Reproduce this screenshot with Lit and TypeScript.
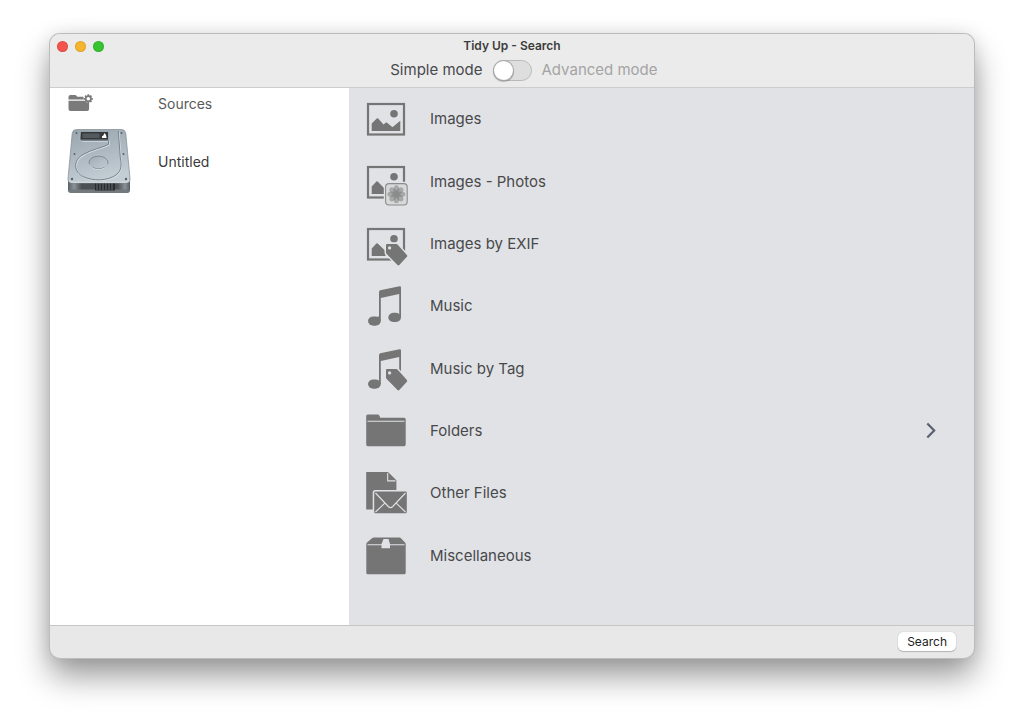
import { LitElement, html, css, svg, nothing } from "lit";
import { customElement, property, state } from "lit/decorators.js";

const frame = svg`
  <rect class="line" x="3" y="8" width="36" height="30.5" stroke-width="2.2" />
  <circle cx="29" cy="17.8" r="3.8" />`;

const tag = svg`
  <path class="halo" d="M22 23h9.2q.8 0 1.3.6l9.4 10.5q.7.9 0 1.7l-7.600 8.200q-.9.800-1.800 0L21.700 33q-.7-.6-.7-1.400V24q0-1 1-1z" />
  <circle class="hole" cx="24.600" cy="26.900" r="1.600" />`;

const icons: Record<string, unknown> = {
  images: svg`${frame}
    <path d="M6.7 27.5 12 22.3q.6-.4 1.2.2l5.3 6 2.9-2.3 5.6 4.6q.5.4 1 0l7.3-6V35H6.7z" />`,
  photos: svg`${frame}
    <path d="M6.7 27.5 11.4 22.4q.7-.5 1.3.1L19 29v6H6.7z" />
    <rect class="cut" x="18.8" y="22.8" width="25" height="24.2" rx="4" />
    <rect class="badge" x="20.6" y="24.6" width="21.6" height="21.4" rx="3.5" />
    <g class="petals">
      ${[0, 45, 90, 135, 180, 225, 270, 315].map(
        (a) => svg`<ellipse cx="31.4" cy="30.6" rx="2.8" ry="4.3" transform="rotate(${a} 31.4 35.3)" />`
      )}
    </g>
    <circle class="core" cx="31.4" cy="35.3" r="1.8" />`,
  exif: svg`${frame}
    <path d="M6.7 27.5 11.4 22.4q.7-.5 1.3.1L20.500 30v5H6.7z" />${tag}`,
  music: svg`
    <path d="M14 9q0-1.300 1.200-1.700L34.500 3.300Q36 3 36 4.500V34H34.200V11L15.800 15V38H14z" />
    <rect x="3" y="33.500" width="12.800" height="9.200" rx="5.500" ry="4.600" />
    <rect x="13" y="33.500" width="1.500" height="4" />
    <rect x="23.300" y="29.800" width="12.700" height="9.200" rx="5.500" ry="4.600" />`,
  musictag: svg`
    <path d="M14 9q0-1.300 1.200-1.700L34.500 3.300Q36 3 36 4.500V30H34.200V11L15.800 15V38H14z" />
    <rect x="3" y="33.500" width="12.800" height="9.200" rx="5.500" ry="4.600" />${tag}`,
  folders: svg`
    <path d="M1.200 8q0-1.500 1.500-1.500h10q1.300 0 1.700 1.200l.9 2h23.800q1.600 0 1.600 1.600v25.300q0 1.600-1.600 1.600H2.800q-1.600 0-1.600-1.600z" />
    <path class="crease" d="M2.500 13.300H39.500" />`,
  files: svg`
    <path d="M1.200 2H23l8.400 8.200v29.200H1.200z" />
    <path class="crease" d="M22.700 3v7.900h7.800" />
    <rect class="halo" x="9.200" y="21.500" width="32.600" height="21.700" rx="1.200" />
    <path class="crease" d="M10.500 23 23.300 36.500q2.200 2.200 4.400 0L40.500 23M10.500 42l9.300-8.800M40.500 42l-9.300-8.800" />`,
  misc: svg`
    <path d="M7 5.300q.7-.7 1.700-.7h25.600q1 0 1.700.7l4 4.200q.7.700.7 1.700v28.500q0 1.600-1.600 1.600H2.900q-1.600 0-1.600-1.600V11.200q0-1 .7-1.700z" />
    <path class="crease" d="M2.500 11.700H39.500" />
    <path class="cut" d="M18.500 6h5l1.500 5v4.200h-8.500V11z" />`,
};

interface Category {
  id: string;
  label: string;
  more?: boolean;
}

const categories: Category[] = [
  { id: "images", label: "Images" },
  { id: "photos", label: "Images - Photos" },
  { id: "exif", label: "Images by EXIF" },
  { id: "music", label: "Music" },
  { id: "musictag", label: "Music by Tag" },
  { id: "folders", label: "Folders", more: true },
  { id: "files", label: "Other Files" },
  { id: "misc", label: "Miscellaneous" },
];

@customElement("category-row")
class CategoryRow extends LitElement {
  @property({ attribute: false }) category!: Category;

  static styles = css`
    :host {
      display: grid;
    }
    .row {
      display: flex;
      align-items: center;
      gap: 21px;
      padding: 0 38px 0 16px;
      border: 0;
      background: none;
      font: 400 15px/20px Inter, sans-serif;
      color: #48494b;
      text-align: left;
    }
    .icon {
      flex: none;
      width: 44px;
      height: 48px;
      fill: #757575;
    }
    .label {
      flex: 1;
    }
    .line {
      fill: none;
      stroke: #757575;
    }
    .halo {
      stroke: #e1e2e6;
      stroke-width: 3;
      paint-order: stroke;
    }
    .cut,
    .hole {
      fill: #e1e2e6;
    }
    .crease {
      fill: none;
      stroke: #e1e2e6;
      stroke-width: 1.1;
    }
    .badge {
      fill: #d8d9db;
      stroke: #8c8c8c;
      stroke-width: 1.1;
    }
    .petals {
      fill: #777;
      fill-opacity: 0.5;
    }
    .core {
      fill: #8b8b8b;
    }
    .chevron {
      flex: none;
      width: 10px;
      height: 18px;
      fill: none;
      stroke: #5b6070;
      stroke-width: 2.2;
    }
  `;

  render() {
    return html`
      <button class="row" type="button">
        <svg class="icon" viewBox="0 -1 44 48" aria-hidden="true">${icons[this.category.id]}</svg>
        <span class="label">${this.category.label}</span>
        ${this.category.more
          ? html`<svg class="chevron" viewBox="0 0 10 18" aria-hidden="true">
              <path d="M1.300 1.500 8.200 8.500 1.300 15.500" />
            </svg>`
          : nothing}
      </button>
    `;
  }
}

@customElement("drive-icon")
class DriveIcon extends LitElement {
  static styles = css`
    :host {
      display: block;
    }
    .drive {
      display: block;
      width: 64px;
      height: 68px;
    }
  `;

  render() {
    return html`
      <svg class="drive" viewBox="0 0 64 68" aria-hidden="true">
        <defs>
          <linearGradient id="top" x1="0" y1="0" x2="0.3" y2="1">
            <stop offset="0" stop-color="#99a5ad" />
            <stop offset="0.6" stop-color="#b0bbc4" />
            <stop offset="1" stop-color="#c3cdd4" />
          </linearGradient>
          <linearGradient id="front" x1="0" y1="0" x2="1" y2="0">
            <stop offset="0" stop-color="#5b6267" />
            <stop offset="0.1" stop-color="#8b9398" />
            <stop offset="0.22" stop-color="#4a5054" />
            <stop offset="0.8" stop-color="#4a5054" />
            <stop offset="0.92" stop-color="#8b9398" />
            <stop offset="1" stop-color="#565d61" />
          </linearGradient>
          <linearGradient id="disc" x1="0" y1="0" x2="1" y2="1">
            <stop offset="0" stop-color="#a0abb4" />
            <stop offset="1" stop-color="#c2ccd3" />
          </linearGradient>
        </defs>
        <path d="M1 52H63V62q0 3-3 3H4q-3 0-3-3z" fill="url(#front)" />
        <path d="M2 61.500H62V63q-.5 2-3 2H5q-2.500 0-3-2z" fill="#73797d" />
        <rect x="28" y="55" width="20" height="7.500" fill="#282c2f" />
        <path d="M30 55v7M33 55v7M36 55v7M39 55v7M42 55v7M45 55v7" stroke="#798085" stroke-width="0.8" />
        <path d="M9.500 1.500H54.500q3.800 0 4.300 4L63 50.500q.4 4.500-4 4.500H5q-4.400 0-4-4.500L5.200 5.500q.5-4 4.300-4z" fill="url(#top)" stroke="#7f8a91" stroke-width="0.7" />
        <path d="M2 52.500q1 1.800 3.200 1.800h53.600q2.200 0 3.200-1.800" fill="none" stroke="#dce3e7" stroke-width="1" />
        <path d="M13.500 3.500H41.500V12H13z" fill="#33383b" stroke="#bac3ca" stroke-width="0.6" />
        <path d="M15.500 5.500h17v4.500h-17z" fill="#545a5e" />
        <path d="M35 10v-1.800l1.300-.8 1.200-2.400 1.500 2 .6 3z" fill="#fff" />
        <path d="M14.500 12.500H41.500V16.500C34 20 25 21.500 17 26 5 32.500 7 44 16 48.500c10 5 25 4.300 33-1.500 6-4.500 5.500-11 4.300-17L51.300 3" fill="none" stroke="#d5dde2" stroke-width="1.3" transform="translate(.6 .6)" />
        <path d="M14.500 12.500H41.500V16.500C34 20 25 21.500 17 26 5 32.500 7 44 16 48.500c10 5 25 4.300 33-1.500 6-4.500 5.500-11 4.300-17L51.300 3" fill="none" stroke="#707b83" stroke-width="0.9" />
        <ellipse cx="31.500" cy="34.500" rx="9.500" ry="6.300" fill="url(#disc)" stroke="#74808a" stroke-width="0.8" />
        <path d="M22.500 36.500q2.500 5 9 5t9-5" fill="none" stroke="#d9e1e6" stroke-width="0.8" />
        <g fill="#56616a">
          <circle cx="9.500" cy="5" r="1" /><circle cx="54.500" cy="5" r="1" />
          <circle cx="7.500" cy="26" r="1" /><circle cx="56.500" cy="26" r="1" />
          <circle cx="5" cy="51" r="1.200" /><circle cx="59" cy="51" r="1.200" />
        </g>
      </svg>
    `;
  }
}

@customElement("app-root")
export class AppRoot extends LitElement {
  @state() private advanced = false;

  static styles = css`
    :host {
      display: flex;
      box-sizing: border-box;
      min-height: 100vh;
      padding: 34px 50px 66px;
      background: #fff;
      overflow: hidden;
      font: 400 15px/20px Inter, sans-serif;
      color: #48494b;
    }
    .window {
      flex: 1;
      display: flex;
      flex-direction: column;
      border-radius: 10px;
      overflow: hidden;
      background: #e8e8e8;
      box-shadow: 0 0 0 1px #bcbcbc, 0 18px 32px rgba(0, 0, 0, 0.4), 0 0 18px rgba(0, 0, 0, 0.1);
    }
    .bar {
      padding: 5px 0 6px;
      background: #ebebeb;
      border-bottom: 1px solid #cdcdcd;
    }
    .titlebar {
      display: grid;
      grid-template-columns: 1fr auto 1fr;
      align-items: center;
      padding: 0 7px;
    }
    .lights {
      display: flex;
      gap: 7px;
    }
    .light {
      width: 11px;
      height: 11px;
      padding: 0;
      border: 0;
      border-radius: 50%;
      box-shadow: inset 0 0 0 1px rgba(0, 0, 0, 0.1);
    }
    .close { background: #f5534d; }
    .minimise { background: #f6b52e; }
    .zoom { background: #38c432; }
    .title {
      margin: 0;
      font: 600 12px/14px Inter, sans-serif;
      color: #3c3c3c;
    }
    .modes {
      display: grid;
      grid-template-columns: 1fr auto 1fr;
      align-items: center;
      gap: 10px;
      height: 22px;
      margin-top: 6px;
    }
    .modes label:first-child {
      text-align: right;
    }
    .off {
      color: #a4a4a4;
    }
    .switch {
      appearance: none;
      box-sizing: border-box;
      display: flex;
      width: 39px;
      height: 21px;
      margin: 0;
      border: 1px solid #b9b9b9;
      border-radius: 11px;
      background: #dedede;
    }
    .switch::before {
      content: "";
      width: 19px;
      height: 19px;
      border-radius: 50%;
      background: #fff;
      box-shadow: 0 0 0 1px #a8a8a8, 0 1px 1px 1px rgba(0, 0, 0, 0.25);
    }
    .switch:checked {
      justify-content: flex-end;
    }
    .content {
      flex: 1;
      display: grid;
      grid-template-columns: minmax(200px, 299fr) 625fr;
    }
    .sources {
      background: #fff;
      padding: 6px 17px;
    }
    .source {
      display: grid;
      grid-template-columns: 66px 1fr;
      align-items: center;
      gap: 25px;
    }
    .heading {
      margin: 0;
      font: 400 14px/20px Inter, sans-serif;
      color: #5a5a5a;
    }
    .name {
      font: 400 14px/20px Inter, sans-serif;
      color: #3a3a3a;
    }
    .list {
      margin: 0;
      padding: 0;
      list-style: none;
    }
    .volume {
      padding-top: 14px;
    }
    .gear-folder {
      display: block;
      width: 28px;
      height: 20px;
      fill: #7a7a7a;
    }
    .categories {
      display: grid;
      grid-auto-rows: 1fr;
      padding-bottom: 38px;
      background: #e1e2e6;
    }
    .category {
      display: grid;
    }
    .footer {
      display: flex;
      justify-content: flex-end;
      padding: 6px 18px 7px;
      border-top: 1px solid #c6c6c6;
    }
    .search {
      padding: 0 9px;
      border: 0;
      border-radius: 5px;
      background: #fff;
      box-shadow: 0 0 1px rgba(0, 0, 0, 0.3), 0 1px 1px rgba(0, 0, 0, 0.2);
      font: 400 12px/19px Inter, sans-serif;
      color: #222;
    }
  `;

  private toggle(e: Event) {
    this.advanced = (e.target as HTMLInputElement).checked;
  }

  render() {
    return html`
      <main class="window">
        <header class="bar">
          <div class="titlebar">
            <div class="lights">
              <button class="light close" type="button" aria-label="Close"></button>
              <button class="light minimise" type="button" aria-label="Minimise"></button>
              <button class="light zoom" type="button" aria-label="Zoom"></button>
            </div>
            <h1 class="title">Tidy Up - Search</h1>
          </div>
          <div class="modes">
            <label for="mode" class=${this.advanced ? "off" : ""}>Simple mode</label>
            <input id="mode" class="switch" type="checkbox" role="switch" .checked=${this.advanced} @change=${this.toggle} />
            <label for="mode" class=${this.advanced ? "" : "off"}>Advanced mode</label>
          </div>
        </header>
        <div class="content">
          <aside class="sources">
            <div class="source">
              <svg class="gear-folder" viewBox="0 0 28 20" aria-hidden="true">
                <path d="M1.500 3q0-2 2-2h4.500q1 0 1.500.8l.7 1H16.500q-.2 1.700.5 2.700H1.500zM1.500 6.700H17.500q1.800 2.300 4.600 2V15q0 2-2 2H3.500q-2 0-2-2z" />
                <circle cx="21.300" cy="4.800" r="2.600" fill="none" stroke="#7a7a7a" stroke-width="1.700" />
                <g stroke="#7a7a7a" stroke-width="1.700">
                  ${[0, 45, 90, 135, 180, 225, 270, 315].map(
                    (a) => svg`<path d="M21.300 2.100V.3" transform="rotate(${a} 21.300 4.800)" />`
                  )}
                </g>
              </svg>
              <h2 class="heading">Sources</h2>
            </div>
            <ul class="list">
              <li class="source volume">
                <drive-icon></drive-icon>
                <span class="name">Untitled</span>
              </li>
            </ul>
          </aside>
          <section class="categories">
            ${categories.map((c) => html`<category-row class="category" .category=${c}></category-row>`)}
          </section>
        </div>
        <footer class="footer">
          <button class="search" type="button">Search</button>
        </footer>
      </main>
    `;
  }
}
